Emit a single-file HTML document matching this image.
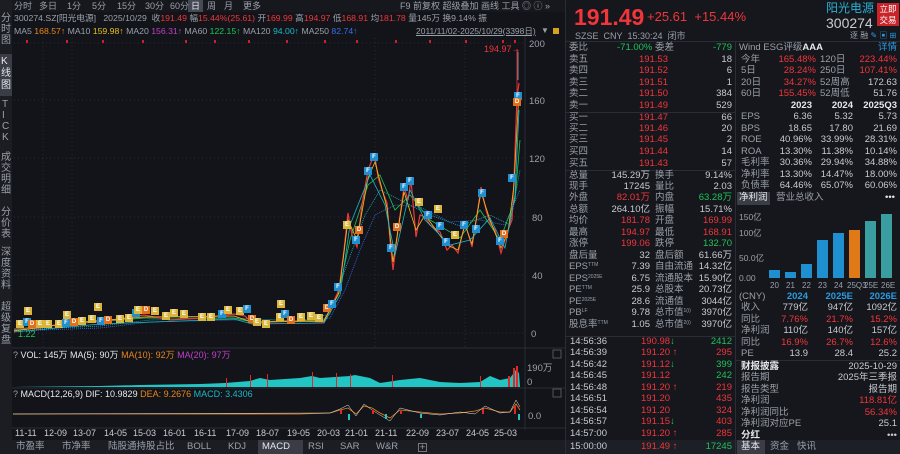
<!DOCTYPE html><html><head><meta charset="utf-8"><style>
*{margin:0;padding:0;box-sizing:border-box}
body{width:900px;height:454px;background:#121419;font-family:"Liberation Sans","Noto Sans CJK SC",sans-serif;font-size:9.5px;color:#c8cbd2;position:relative;overflow:hidden}
.a{position:absolute;white-space:nowrap;line-height:12px}
.r{color:#f0363b}.g{color:#1fc25a}.gr{color:#9aa0aa}.y{color:#e8c020}.o{color:#e8861c}.m{color:#c040c8}.c{color:#1cb6c6}.b{color:#3b6ee8}.w{color:#e6e8ec}
.row{position:absolute;height:12px;line-height:12px;white-space:nowrap;font-size:9.5px}
.row span{position:absolute}
sup{font-size:5px;vertical-align:top;line-height:8px}
.mk{position:absolute;width:8px;height:8px;font-size:6px;line-height:8px;text-align:center;color:#fff;font-weight:bold}
.mE{background:#d9b53a}.mD{background:#e0701c}.mF{background:#1f8fd0}
</style></head><body>
<div class="a" style="left:0;top:0;width:12px;height:454px;background:#1b1d23"></div>
<div class="a gr" style="left:1px;top:13px;width:11px;line-height:11px;font-size:10px;white-space:normal">分<br>时<br>图</div>
<div class="a" style="left:0;top:54px;width:12px;height:42px;background:#3a3d46"></div>
<div class="a w" style="left:1px;top:56px;width:11px;line-height:12px;font-size:10px;white-space:normal">K<br>线<br>图</div>
<div class="a gr" style="left:2px;top:99px;width:11px;line-height:11px;font-size:10px;white-space:normal">T<br>I<br>C<br>K</div>
<div class="a gr" style="left:1px;top:152px;width:11px;line-height:11px;font-size:10px;white-space:normal">成<br>交<br>明<br>细</div>
<div class="a gr" style="left:1px;top:207px;width:11px;line-height:11px;font-size:10px;white-space:normal">分<br>价<br>表</div>
<div class="a gr" style="left:1px;top:247px;width:11px;line-height:11px;font-size:10px;white-space:normal">深<br>度<br>资<br>料</div>
<div class="a gr" style="left:1px;top:302px;width:11px;line-height:11px;font-size:10px;white-space:normal">超<br>级<br>复<br>盘</div>
<div class="a" style="left:12px;top:0;width:553px;height:12px;background:#16181d"></div>
<div class="a" style="left:188px;top:0;width:15px;height:12px;background:#454a55"></div>
<div class="a gr" style="left:14px;top:0;font-size:9px">分时</div><div class="a gr" style="left:39px;top:0;font-size:9px">多日</div><div class="a gr" style="left:67px;top:0;font-size:9px">1分</div><div class="a gr" style="left:92px;top:0;font-size:9px">5分</div><div class="a gr" style="left:117px;top:0;font-size:9px">15分</div><div class="a gr" style="left:145px;top:0;font-size:9px">30分</div><div class="a gr" style="left:170px;top:0;font-size:9px">60分</div>
<div class="a w" style="left:191px;top:0;font-size:9px">日</div>
<div class="a gr" style="left:207px;top:0;font-size:9px">周</div><div class="a gr" style="left:224px;top:0;font-size:9px">月</div><div class="a gr" style="left:243px;top:0;font-size:9px">更多</div>
<div class="a gr" style="left:400px;top:0;font-size:9px">F9 前复权 超级叠加 画线 工具 ◎ ⓘ »</div>
<div class="a" style="left:14px;top:12px;font-size:8.7px"><span class="gr">300274.SZ[阳光电源]&nbsp;&nbsp;&nbsp;2025/10/29&nbsp; 收</span><span class="r">191.49</span> <span class="gr">幅</span><span class="r">15.44%(25.61)</span> <span class="gr">开</span><span class="r">169.99</span> <span class="gr">高</span><span class="r">194.97</span> <span class="gr">低</span><span class="r">168.91</span> <span class="gr">均</span><span class="r">181.78</span> <span class="gr">量145万 换9.14% 振</span></div>
<div class="a" style="left:14px;top:25px;font-size:8.7px"><span class="gr">MA5 </span><span class="o">168.57↑</span> <span class="gr">MA10 </span><span class="y">159.98↑</span> <span class="gr">MA20 </span><span class="m">156.31↑</span> <span class="gr">MA60 </span><span class="g">122.15↑</span> <span class="gr">MA120 </span><span class="c">94.00↑</span> <span class="gr">MA250 </span><span class="b">82.74↑</span></div>
<div class="a gr" style="left:416px;top:25px;font-size:8.5px;text-decoration:underline">2011/11/02-2025/10/29(3398日)</div>
<div class="a gr" style="left:541px;top:25px;font-size:8px">▼</div>
<div class="a" style="left:553px;top:28px;width:6px;height:6px;background:#d9a020"></div>
<svg class="a" style="left:12px;top:0" width="553" height="440" viewBox="12 0 553 440">
<g stroke="#2a2d35" stroke-dasharray="1 3" stroke-width="1">
<line x1="14" y1="43" x2="525" y2="43"/><line x1="14" y1="100" x2="525" y2="100"/><line x1="14" y1="158" x2="525" y2="158"/><line x1="14" y1="217" x2="525" y2="217"/><line x1="14" y1="275" x2="525" y2="275"/><line x1="14" y1="333" x2="525" y2="333"/>
<line x1="43" y1="38" x2="43" y2="348"/><line x1="72" y1="38" x2="72" y2="348"/><line x1="375" y1="38" x2="375" y2="348"/><line x1="465" y1="38" x2="465" y2="348"/>
</g>
<line x1="525" y1="36" x2="525" y2="430" stroke="#2a2d35"/>
<line x1="12" y1="348" x2="565" y2="348" stroke="#2a2d35"/>
<line x1="12" y1="388" x2="565" y2="388" stroke="#2a2d35"/>
<line x1="12" y1="428" x2="565" y2="428" stroke="#2a2d35"/>
<g fill="#9aa0aa" font-size="9.5" font-family="Liberation Sans">
<text x="529" y="47">200</text><text x="529" y="104">160</text><text x="529" y="162">120</text><text x="532" y="221">80</text><text x="532" y="279">40</text><text x="531" y="337">0</text>
<text x="527" y="371">190万</text><text x="527" y="385">0</text><text x="528" y="419">0.0</text>
</g>
<text x="484" y="52" fill="#f0363b" font-size="9" font-family="Liberation Sans">194.97→</text>
<text x="18" y="337" fill="#1fc25a" font-size="9" font-family="Liberation Sans">1.22</text>
<g fill="#d02020"><rect x="26" y="40" width="2" height="3"/><rect x="66" y="40" width="2" height="3"/><rect x="102" y="40" width="2" height="3"/><rect x="142" y="40" width="2" height="3"/><rect x="185" y="40" width="2" height="3"/><rect x="214" y="40" width="2" height="3"/><rect x="248" y="40" width="2" height="3"/><rect x="286" y="40" width="2" height="3"/><rect x="324" y="40" width="2" height="3"/><rect x="356" y="40" width="2" height="3"/><rect x="395" y="40" width="2" height="3"/><rect x="429" y="40" width="2" height="3"/><rect x="465" y="40" width="2" height="3"/><rect x="502" y="40" width="2" height="3"/><rect x="514" y="40" width="2" height="3"/></g>
<polyline fill="none" stroke="#3b6ee8" stroke-width="0.8" stroke-dasharray="1 1" points="14,331 100,328 150,322 234,320 300,322 330,318 345,290 360,250 375,215 395,205 420,207 450,222 480,220 505,225 520,190"/>
<polyline fill="none" stroke="#1cb6c6" stroke-width="0.8" stroke-dasharray="1 1" points="14,330 100,326 150,320 234,318 300,321 330,314 345,270 365,215 380,190 400,200 430,215 460,226 490,215 510,225 520,170"/>
<polyline fill="none" stroke="#1fc25a" stroke-width="0.8" points="14,329 144,318 234,318 252,322 324,320 338,295 350,240 368,185 380,175 395,210 410,195 430,220 460,238 480,210 500,240 515,200 520,140"/>
<polyline fill="none" stroke="#f0363b" stroke-width="1.2" points="14,330 40,328 70,322 100,322 144,315 170,320 200,318 234,314 245,316 252,323 270,322 300,321 324,322 331,307 339,290 344,250 348,213 352,235 357,247 362,205 368,170 372,160 375,157 378,177 382,190 387,203 390,240 393,270 398,230 404,187 408,200 411,180 416,237 420,215 425,217 430,225 440,232 447,250 452,245 458,253 465,223 472,247 477,215 481,187 486,210 490,223 495,230 501,253 508,230 512,220 514,180 517,97 519,83"/>
<polyline fill="none" stroke="#e8c020" stroke-width="0.8" points="14,331 70,323 144,317 234,316 252,322 324,321 339,293 348,220 357,240 368,178 375,162 387,208 393,262 404,192 416,230 425,215 447,245 458,250 465,225 472,244 481,192 490,220 501,248 508,232 514,185 519,92"/>
<polyline fill="none" stroke="#1cb6c6" stroke-width="0.8" points="14,332 100,324 234,319 252,324 324,323 340,295 350,225 370,175 385,205 395,255 410,190 425,220 450,245 470,240 490,218 505,248 515,195 519,110"/>
<line x1="517" y1="49" x2="517" y2="100" stroke="#f0363b" stroke-width="0.8"/>
<line x1="518" y1="52" x2="518" y2="80" stroke="#9aa0aa" stroke-width="0.8"/>
<polygon fill="#22c4c4" points="13,387 100,386 140,385 200,384 225,383 250,381 260,378 270,380 300,378 312,376 320,378 350,376 355,375 370,378 380,383 400,380 420,378 440,382 460,383 480,382 490,376 500,380 510,378 516,370 519,373 520,387"/>
<g fill="#e02828"><rect x="226" y="378" width="1" height="9"/><rect x="250" y="375" width="1" height="12"/><rect x="267" y="374" width="1" height="13"/><rect x="312" y="372" width="1" height="15"/><rect x="336" y="373" width="1" height="14"/><rect x="350" y="374" width="1" height="13"/><rect x="392" y="375" width="1" height="12"/><rect x="480" y="376" width="1" height="11"/><rect x="508" y="376" width="2" height="11"/><rect x="513" y="368" width="2" height="19"/><rect x="516" y="366" width="2" height="21"/></g>
<polyline fill="none" stroke="#e8861c" stroke-width="0.8" points="13,414 300,414 330,413 340,410 348,408 356,414 364,406 372,408 380,413 390,418 400,410 420,412 440,414 460,413 475,411 485,408 500,412 510,412 516,404 520,410"/>
<polyline fill="none" stroke="#e6e8ec" stroke-width="0.5" points="13,414 330,413 340,409 348,405 356,416 364,404 372,410 380,415 390,421 400,408 420,413 440,415 460,412 475,414 485,406 500,413 510,412 516,400 520,407"/>
<g fill="#22c4c4"><rect x="348" y="414" width="2" height="6"/><rect x="385" y="414" width="2" height="5"/><rect x="420" y="414" width="2" height="4"/><rect x="518" y="414" width="2" height="6"/></g>
<g fill="#e02828"><rect x="340" y="410" width="2" height="4"/><rect x="372" y="410" width="2" height="4"/><rect x="400" y="411" width="2" height="3"/><rect x="482" y="409" width="2" height="5"/><rect x="514" y="406" width="2" height="8"/></g>
<g fill="#c8cbd2" font-size="9" font-family="Liberation Sans">
<text x="15" y="436">11-11</text><text x="44" y="436">12-09</text><text x="73" y="436">13-07</text><text x="104" y="436">14-05</text><text x="133" y="436">15-03</text><text x="163" y="436">16-01</text><text x="194" y="436">16-11</text><text x="226" y="436">17-09</text><text x="256" y="436">18-07</text><text x="287" y="436">19-05</text><text x="317" y="436">20-03</text><text x="345" y="436">21-01</text><text x="375" y="436">21-11</text><text x="406" y="436">22-09</text><text x="436" y="436">23-07</text><text x="466" y="436">24-05</text><text x="494" y="436">25-03</text>
</g>
<rect x="553" y="350" width="8" height="8" fill="none" stroke="#555"/><rect x="553" y="389" width="8" height="8" fill="none" stroke="#555"/>
</svg>
<div class="a" style="left:13px;top:349px;font-size:9px"><span class="gr">? </span><span class="w">VOL: 145万 MA(5): 90万 </span><span class="o">MA(10): 92万 </span><span class="m">MA(20): 97万</span></div>
<div class="a" style="left:13px;top:388px;font-size:9px"><span class="gr">? </span><span class="w">MACD(12,26,9) DIF: 10.9829 </span><span class="o">DEA: 9.2676 </span><span class="c">MACD: 3.4306</span></div>
<div class="mk mF" style="left:370px;top:153px">F</div><div class="mk mF" style="left:364px;top:167px">F</div><div class="mk mF" style="left:400px;top:183px">F</div><div class="mk mF" style="left:406px;top:177px">F</div><div class="mk mE" style="left:415px;top:198px">E</div><div class="mk mE" style="left:434px;top:205px">E</div><div class="mk mF" style="left:424px;top:211px">F</div><div class="mk mF" style="left:436px;top:222px">F</div><div class="mk mD" style="left:393px;top:223px">D</div><div class="mk mE" style="left:343px;top:221px">E</div><div class="mk mD" style="left:355px;top:226px">D</div><div class="mk mF" style="left:352px;top:236px">F</div><div class="mk mF" style="left:387px;top:244px">F</div><div class="mk mF" style="left:442px;top:238px">F</div><div class="mk mE" style="left:451px;top:231px">E</div><div class="mk mF" style="left:460px;top:221px">F</div><div class="mk mF" style="left:472px;top:225px">F</div><div class="mk mF" style="left:478px;top:189px">F</div><div class="mk mD" style="left:500px;top:230px">D</div><div class="mk mF" style="left:496px;top:237px">F</div><div class="mk mF" style="left:508px;top:174px">F</div><div class="mk mF" style="left:514px;top:92px">F</div><div class="mk mD" style="left:513px;top:98px">D</div><div class="mk mF" style="left:334px;top:283px">F</div><div class="mk mD" style="left:323px;top:304px">D</div><div class="mk mF" style="left:328px;top:300px">F</div>
<div class="mk mE" style="left:24px;top:307px">E</div><div class="mk mE" style="left:63px;top:311px">E</div><div class="mk mE" style="left:94px;top:303px">E</div>
<div class="mk mE" style="left:16px;top:320px">E</div><div class="mk mF" style="left:23px;top:318px">F</div><div class="mk mD" style="left:28px;top:320px">D</div><div class="mk mE" style="left:36px;top:320px">E</div><div class="mk mE" style="left:44px;top:320px">E</div><div class="mk mE" style="left:55px;top:320px">E</div><div class="mk mF" style="left:62px;top:319px">F</div><div class="mk mD" style="left:70px;top:318px">D</div><div class="mk mE" style="left:78px;top:317px">E</div><div class="mk mE" style="left:88px;top:315px">E</div><div class="mk mF" style="left:97px;top:317px">F</div><div class="mk mD" style="left:104px;top:316px">D</div><div class="mk mE" style="left:116px;top:315px">E</div><div class="mk mE" style="left:125px;top:314px">E</div><div class="mk mF" style="left:132px;top:309px">F</div><div class="mk mE" style="left:134px;top:306px">E</div><div class="mk mD" style="left:142px;top:306px">D</div><div class="mk mE" style="left:151px;top:307px">E</div><div class="mk mE" style="left:162px;top:312px">E</div><div class="mk mE" style="left:170px;top:309px">E</div><div class="mk mE" style="left:180px;top:310px">E</div><div class="mk mE" style="left:198px;top:313px">E</div><div class="mk mE" style="left:207px;top:313px">E</div><div class="mk mF" style="left:218px;top:310px">F</div><div class="mk mE" style="left:224px;top:306px">E</div><div class="mk mE" style="left:236px;top:307px">E</div><div class="mk mF" style="left:243px;top:305px">F</div><div class="mk mD" style="left:248px;top:315px">D</div><div class="mk mE" style="left:253px;top:318px">E</div><div class="mk mE" style="left:262px;top:320px">E</div><div class="mk mE" style="left:276px;top:313px">E</div><div class="mk mF" style="left:281px;top:310px">F</div><div class="mk mD" style="left:287px;top:316px">D</div><div class="mk mE" style="left:297px;top:313px">E</div><div class="mk mE" style="left:307px;top:312px">E</div><div class="mk mE" style="left:315px;top:314px">E</div><div class="mk mE" style="left:277px;top:300px">E</div>
<div class="a" style="left:12px;top:440px;width:553px;height:14px;background:#1b1d23"></div>
<div class="a" style="left:258px;top:440px;width:45px;height:14px;background:#3a3d46"></div>
<div class="a gr" style="left:16px;top:441px">市盈率</div><div class="a gr" style="left:62px;top:441px">市净率</div><div class="a gr" style="left:108px;top:441px">陆股通持股占比</div><div class="a gr" style="left:187px;top:441px">BOLL</div><div class="a gr" style="left:228px;top:441px">KDJ</div><div class="a w" style="left:262px;top:441px">MACD</div><div class="a gr" style="left:308px;top:441px">RSI</div><div class="a gr" style="left:340px;top:441px">SAR</div><div class="a gr" style="left:376px;top:441px">W&amp;R</div><div class="a gr" style="left:418px;top:443px;border:1px solid #777;width:9px;height:9px;line-height:8px;text-align:center">+</div>
<div class="a" style="left:565px;top:0;width:335px;height:454px;background:#15171c;border-left:1px solid #2a2d35"></div>
<div class="a r" style="left:574px;top:4px;font-size:23px;line-height:26px;font-weight:bold">191.49</div>
<div class="a r" style="left:647px;top:9px;font-size:13px;line-height:16px">+25.61&nbsp;&nbsp;+15.44%</div>
<div class="a" style="left:826px;top:1px;font-size:12px;line-height:15px;color:#2ab0d6">阳光电源</div>
<div class="a" style="left:826px;top:15px;font-size:14px;line-height:16px;color:#c8cbd2">300274</div>
<div class="a" style="left:877px;top:3px;width:22px;height:23px;background:#c8242a;color:#fff;font-size:8.5px;line-height:11px;text-align:center;padding-top:1px;white-space:normal">立即<br>交易</div>
<div class="a gr" style="left:575px;top:30px;font-size:9px">SZSE&nbsp;&nbsp;CNY&nbsp;&nbsp;15:30:24&nbsp;&nbsp;闭市</div>
<div class="a gr" style="left:850px;top:30px;font-size:8px">逐 融 <span style="color:#2a9be0">✎ ▣ ⊞</span></div>
<div class="a" style="left:566px;top:41px;width:334px;height:1px;background:#2a2d35"></div>
<div class="a" style="left:735px;top:41px;width:1px;height:413px;background:#2a2d35"></div>
<div class="a" style="left:566px;top:112px;width:169px;height:1px;background:#2a2d35"></div>
<div class="a" style="left:566px;top:170px;width:169px;height:1px;background:#2a2d35"></div>
<div class="a" style="left:566px;top:336px;width:169px;height:1px;background:#2a2d35"></div>
<div class="a" style="left:566px;top:440px;width:169px;height:14px;background:#1c1f25"></div>
<div class="row" style="left:566px;top:42px;width:168px"><span class="gr" style="left:3px">委比</span><span class="g" style="left:51px">-71.00%</span><span class="gr" style="left:89px">委差</span><span class="g" style="right:2px">-779</span></div>
<div class="row" style="left:566px;top:54px;width:168px"><span class="gr" style="left:3px">卖五</span><span class="r" style="right:66px">191.53</span><span style="right:2px">18</span></div>
<div class="row" style="left:566px;top:65px;width:168px"><span class="gr" style="left:3px">卖四</span><span class="r" style="right:66px">191.52</span><span style="right:2px">6</span></div>
<div class="row" style="left:566px;top:77px;width:168px"><span class="gr" style="left:3px">卖三</span><span class="r" style="right:66px">191.51</span><span style="right:2px">1</span></div>
<div class="row" style="left:566px;top:88px;width:168px"><span class="gr" style="left:3px">卖二</span><span class="r" style="right:66px">191.50</span><span style="right:2px">384</span></div>
<div class="row" style="left:566px;top:100px;width:168px"><span class="gr" style="left:3px">卖一</span><span class="r" style="right:66px">191.49</span><span style="right:2px">529</span></div>
<div class="row" style="left:566px;top:112px;width:168px"><span class="gr" style="left:3px">买一</span><span class="r" style="right:66px">191.47</span><span style="right:2px">66</span></div>
<div class="row" style="left:566px;top:123px;width:168px"><span class="gr" style="left:3px">买二</span><span class="r" style="right:66px">191.46</span><span style="right:2px">20</span></div>
<div class="row" style="left:566px;top:134px;width:168px"><span class="gr" style="left:3px">买三</span><span class="r" style="right:66px">191.45</span><span style="right:2px">2</span></div>
<div class="row" style="left:566px;top:146px;width:168px"><span class="gr" style="left:3px">买四</span><span class="r" style="right:66px">191.44</span><span style="right:2px">14</span></div>
<div class="row" style="left:566px;top:158px;width:168px"><span class="gr" style="left:3px">买五</span><span class="r" style="right:66px">191.43</span><span style="right:2px">57</span></div>
<div class="row" style="left:566px;top:170px;width:168px"><span class="gr" style="left:3px">总量</span><span style="right:84px">145.29万</span><span class="gr" style="left:89px">换手</span><span style="right:2px">9.14%</span></div>
<div class="row" style="left:566px;top:181px;width:168px"><span class="gr" style="left:3px">现手</span><span style="right:84px">17245</span><span class="gr" style="left:89px">量比</span><span style="right:2px">2.03</span></div>
<div class="row" style="left:566px;top:192px;width:168px"><span class="gr" style="left:3px">外盘</span><span class="r" style="right:84px">82.01万</span><span class="gr" style="left:89px">内盘</span><span class="g" style="right:2px">63.28万</span></div>
<div class="row" style="left:566px;top:204px;width:168px"><span class="gr" style="left:3px">总额</span><span style="right:84px">264.10亿</span><span class="gr" style="left:89px">振幅</span><span style="right:2px">15.71%</span></div>
<div class="row" style="left:566px;top:215px;width:168px"><span class="gr" style="left:3px">均价</span><span class="r" style="right:84px">181.78</span><span class="gr" style="left:89px">开盘</span><span class="r" style="right:2px">169.99</span></div>
<div class="row" style="left:566px;top:227px;width:168px"><span class="gr" style="left:3px">最高</span><span class="r" style="right:84px">194.97</span><span class="gr" style="left:89px">最低</span><span class="r" style="right:2px">168.91</span></div>
<div class="row" style="left:566px;top:238px;width:168px"><span class="gr" style="left:3px">涨停</span><span class="r" style="right:84px">199.06</span><span class="gr" style="left:89px">跌停</span><span class="g" style="right:2px">132.70</span></div>
<div class="row" style="left:566px;top:250px;width:168px"><span class="gr" style="left:3px">盘后量</span><span style="right:84px">32</span><span class="gr" style="left:89px">盘后额</span><span style="right:2px">61.66万</span></div>
<div class="row" style="left:566px;top:261px;width:168px"><span class="gr" style="left:3px">EPS<sup>TTM</sup></span><span style="right:84px">7.39</span><span class="gr" style="left:89px">自由流通</span><span style="right:2px">14.32亿</span></div>
<div class="row" style="left:566px;top:273px;width:168px"><span class="gr" style="left:3px">EPS<sup>2025E</sup></span><span style="right:84px">6.75</span><span class="gr" style="left:89px">流通股本</span><span style="right:2px">15.90亿</span></div>
<div class="row" style="left:566px;top:284px;width:168px"><span class="gr" style="left:3px">PE<sup>TTM</sup></span><span style="right:84px">25.9</span><span class="gr" style="left:89px">总股本</span><span style="right:2px">20.73亿</span></div>
<div class="row" style="left:566px;top:296px;width:168px"><span class="gr" style="left:3px">PE<sup>2025E</sup></span><span style="right:84px">28.6</span><span class="gr" style="left:89px">流通值</span><span style="right:2px">3044亿</span></div>
<div class="row" style="left:566px;top:307px;width:168px"><span class="gr" style="left:3px">PB<sup>LF</sup></span><span style="right:84px">9.78</span><span class="gr" style="left:89px">总市值<sup>1(i)</sup></span><span style="right:2px">3970亿</span></div>
<div class="row" style="left:566px;top:319px;width:168px"><span class="gr" style="left:3px">股息率<sup>TTM</sup></span><span style="right:84px">1.05</span><span class="gr" style="left:89px">总市值<sup>2(i)</sup></span><span style="right:2px">3970亿</span></div>
<div class="row" style="left:566px;top:336px;width:168px"><span style="left:4px">14:56:36</span><span class="r" style="left:75px">190.98<span class="g"> ↓</span></span><span class="g" style="right:2px">2412</span></div>
<div class="row" style="left:566px;top:347px;width:168px"><span style="left:4px">14:56:39</span><span class="r" style="left:75px">191.20 ↑</span><span class="r" style="right:2px">295</span></div>
<div class="row" style="left:566px;top:359px;width:168px"><span style="left:4px">14:56:42</span><span class="r" style="left:75px">191.12<span class="g"> ↓</span></span><span class="g" style="right:2px">399</span></div>
<div class="row" style="left:566px;top:370px;width:168px"><span style="left:4px">14:56:45</span><span class="r" style="left:75px">191.12</span><span class="g" style="right:2px">242</span></div>
<div class="row" style="left:566px;top:382px;width:168px"><span style="left:4px">14:56:48</span><span class="r" style="left:75px">191.20 ↑</span><span class="r" style="right:2px">219</span></div>
<div class="row" style="left:566px;top:393px;width:168px"><span style="left:4px">14:56:51</span><span class="r" style="left:75px">191.20</span><span class="r" style="right:2px">435</span></div>
<div class="row" style="left:566px;top:405px;width:168px"><span style="left:4px">14:56:54</span><span class="r" style="left:75px">191.20</span><span class="r" style="right:2px">324</span></div>
<div class="row" style="left:566px;top:416px;width:168px"><span style="left:4px">14:56:57</span><span class="r" style="left:75px">191.15<span class="g"> ↓</span></span><span class="r" style="right:2px">403</span></div>
<div class="row" style="left:566px;top:428px;width:168px"><span style="left:4px">14:57:00</span><span class="r" style="left:75px">191.20 ↑</span><span class="r" style="right:2px">285</span></div>
<div class="row" style="left:566px;top:441px;width:168px"><span style="left:4px">15:00:00</span><span class="r" style="left:75px">191.49 ↑</span><span class="g" style="right:2px">17245</span></div>
<div class="row" style="left:736px;top:42px;width:164px"><span class="gr" style="left:3px">Wind ESG评级<b class="w">AAA</b></span><span style="right:3px;color:#2a9be0">详情</span></div>
<div class="row" style="left:736px;top:54px;width:164px"><span class="gr" style="left:5px">今年</span><span class="r" style="right:84px">165.48%</span><span class="gr" style="left:84px">120日</span><span class="r" style="right:3px">223.44%</span></div>
<div class="row" style="left:736px;top:65px;width:164px"><span class="gr" style="left:5px">5日</span><span class="r" style="right:84px">28.24%</span><span class="gr" style="left:84px">250日</span><span class="r" style="right:3px">107.41%</span></div>
<div class="row" style="left:736px;top:77px;width:164px"><span class="gr" style="left:5px">20日</span><span class="r" style="right:84px">34.27%</span><span class="gr" style="left:84px">52周高</span><span style="right:3px">172.63</span></div>
<div class="row" style="left:736px;top:88px;width:164px"><span class="gr" style="left:5px">60日</span><span class="r" style="right:84px">155.45%</span><span class="gr" style="left:84px">52周低</span><span style="right:3px">51.76</span></div>
<div class="row" style="left:736px;top:100px;width:164px;font-weight:bold"><span class="w" style="right:88px">2023</span><span class="w" style="right:47px">2024</span><span class="w" style="right:3px">2025Q3</span></div>
<div class="row" style="left:736px;top:111px;width:164px"><span class="gr" style="left:5px">EPS</span><span style="right:88px">6.36</span><span style="right:47px">5.32</span><span style="right:3px">5.73</span></div>
<div class="row" style="left:736px;top:123px;width:164px"><span class="gr" style="left:5px">BPS</span><span style="right:88px">18.65</span><span style="right:47px">17.80</span><span style="right:3px">21.69</span></div>
<div class="row" style="left:736px;top:134px;width:164px"><span class="gr" style="left:5px">ROE</span><span style="right:88px">40.96%</span><span style="right:47px">33.99%</span><span style="right:3px">28.31%</span></div>
<div class="row" style="left:736px;top:146px;width:164px"><span class="gr" style="left:5px">ROA</span><span style="right:88px">13.30%</span><span style="right:47px">11.38%</span><span style="right:3px">10.14%</span></div>
<div class="row" style="left:736px;top:157px;width:164px"><span class="gr" style="left:5px">毛利率</span><span style="right:88px">30.36%</span><span style="right:47px">29.94%</span><span style="right:3px">34.88%</span></div>
<div class="row" style="left:736px;top:169px;width:164px"><span class="gr" style="left:5px">净利率</span><span style="right:88px">13.30%</span><span style="right:47px">14.47%</span><span style="right:3px">18.00%</span></div>
<div class="row" style="left:736px;top:180px;width:164px"><span class="gr" style="left:5px">负债率</span><span style="right:88px">64.46%</span><span style="right:47px">65.07%</span><span style="right:3px">60.06%</span></div>
<div class="a" style="left:737px;top:192px;width:33px;height:13px;background:#3a3d46"></div>
<div class="row" style="left:736px;top:192px;width:164px"><span class="w" style="left:3px">净利润</span><span class="gr" style="left:40px">营业总收入</span><span class="w" style="right:5px">•••</span></div>
<svg class="a" style="left:736px;top:205px" width="164" height="88">
<g fill="#9aa0aa" font-size="8.5" font-family="Liberation Sans, Noto Sans CJK SC"><text x="3" y="15">150亿</text><text x="3" y="31">100亿</text><text x="3" y="56">50.0亿</text><text x="3" y="76">0.00</text></g>
<g fill="#9aa0aa" font-size="8" font-family="Liberation Sans"><text x="34" y="83">20</text><text x="50" y="83">21</text><text x="66" y="83">22</text><text x="82" y="83">23</text><text x="98" y="83">24</text><text x="111" y="83">25Q3</text><text x="128" y="83">25E</text><text x="145" y="83">26E</text></g>
<rect x="33" y="65" width="11" height="8" fill="#1f8fd0"/><rect x="49" y="67" width="11" height="6" fill="#1f8fd0"/><rect x="65" y="59" width="11" height="14" fill="#1f8fd0"/><rect x="81" y="35" width="11" height="38" fill="#1f8fd0"/><rect x="97" y="28" width="11" height="45" fill="#1f8fd0"/><rect x="113" y="25" width="11" height="48" fill="#e07a18"/><rect x="129" y="16" width="11" height="57" fill="#3a9ea0"/><rect x="145" y="9" width="11" height="64" fill="#3a9ea0"/>
</svg>
<div class="row" style="left:736px;top:291px;width:164px;font-weight:bold"><span class="gr" style="left:3px;font-weight:normal">(CNY)</span><span style="right:92px;color:#2a9be0">2024</span><span style="right:47px;color:#2a9be0">2025E</span><span style="right:3px;color:#2a9be0">2026E</span></div>
<div class="row" style="left:736px;top:302px;width:164px"><span class="gr" style="left:5px">收入</span><span style="right:92px">779亿</span><span style="right:47px">947亿</span><span style="right:3px">1092亿</span></div>
<div class="row" style="left:736px;top:314px;width:164px"><span class="gr" style="left:5px">同比</span><span class="r" style="right:92px">7.76%</span><span class="r" style="right:47px">21.7%</span><span class="r" style="right:3px">15.2%</span></div>
<div class="row" style="left:736px;top:325px;width:164px"><span class="gr" style="left:5px">净利润</span><span style="right:92px">110亿</span><span style="right:47px">140亿</span><span style="right:3px">157亿</span></div>
<div class="row" style="left:736px;top:337px;width:164px"><span class="gr" style="left:5px">同比</span><span class="r" style="right:92px">16.9%</span><span class="r" style="right:47px">26.7%</span><span class="r" style="right:3px">12.6%</span></div>
<div class="row" style="left:736px;top:348px;width:164px"><span class="gr" style="left:5px">PE</span><span style="right:92px">13.9</span><span style="right:47px">28.4</span><span style="right:3px">25.2</span></div>
<div class="a" style="left:736px;top:360px;width:164px;height:1px;background:#2a2d35"></div>
<div class="row" style="left:736px;top:361px;width:164px"><span class="w" style="left:5px;font-weight:bold">财报披露</span><span style="right:3px">2025-10-29</span></div>
<div class="row" style="left:736px;top:372px;width:164px"><span class="gr" style="left:5px">报告期</span><span style="right:3px">2025年三季报</span></div>
<div class="row" style="left:736px;top:384px;width:164px"><span class="gr" style="left:5px">报告类型</span><span style="right:3px">报告期</span></div>
<div class="row" style="left:736px;top:395px;width:164px"><span class="gr" style="left:5px">净利润</span><span class="r" style="right:3px">118.81亿</span></div>
<div class="row" style="left:736px;top:407px;width:164px"><span class="gr" style="left:5px">净利润同比</span><span class="r" style="right:3px">56.34%</span></div>
<div class="row" style="left:736px;top:418px;width:164px"><span class="gr" style="left:5px">净利润对应PE</span><span style="right:3px">25.1</span></div>
<div class="row" style="left:736px;top:430px;width:164px"><span class="w" style="left:5px;font-weight:bold">分红</span><span style="right:3px">•••</span></div>
<div class="a" style="left:736px;top:440px;width:164px;height:14px;background:#1c1f25"></div>
<div class="a" style="left:737px;top:440px;width:28px;height:14px;background:#3a3d46"></div>
<div class="a w" style="left:741px;top:441px">基本</div><div class="a gr" style="left:770px;top:441px">资金</div><div class="a gr" style="left:797px;top:441px">快讯</div>
</body></html>
